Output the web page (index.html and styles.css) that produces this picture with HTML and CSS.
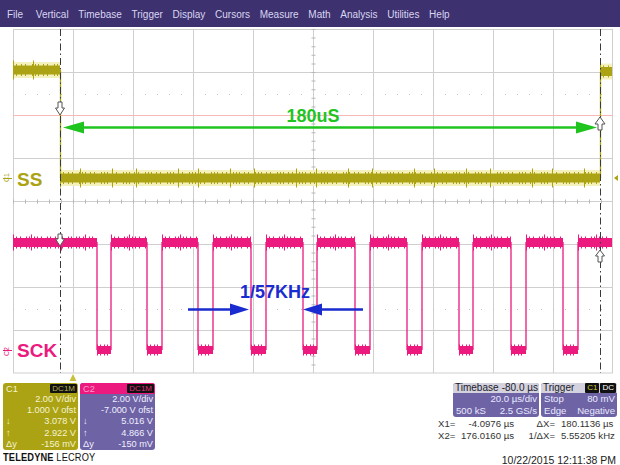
FILE: index.html
```html
<!DOCTYPE html>
<html lang="en">
<head>
    <meta charset="UTF-8">
    <title>Scope capture</title>
    <link rel="stylesheet" href="styles.css">
</head>
<body>
    <div class="scope">
        <nav class="menubar">
            <span>File</span>
            <span>Vertical</span>
            <span>Timebase</span>
            <span>Trigger</span>
            <span>Display</span>
            <span>Cursors</span>
            <span>Measure</span>
            <span>Math</span>
            <span>Analysis</span>
            <span>Utilities</span>
            <span>Help</span>
        </nav>

        <svg class="screen" width="620" height="354" viewBox="0 27 620 354">
            <defs>
                <path id="ss-bands" d="M13 70H60 M60 178H600 M600 71.5H612"/>
                <path id="sck-highs" d="M13 242.5H97 M111 242.5H147 M162 242.5H198 M213 242.5H251 M266 242.5H303 M317 242.5H355 M370 242.5H407 M422 242.5H459 M473 242.5H511 M526 242.5H563 M578 242.5H612"/>
                <path id="sck-lows" d="M97 350H111 M147 350H162 M198 350H213 M251 350H266 M303 350H317 M355 350H370 M407 350H422 M459 350H473 M511 350H526 M563 350H578"/>
            </defs>

            <!-- graticule -->
            <g class="grid">
                <rect x="13.5" y="29.5" width="599" height="343.5"/>
                <path d="M73.5 29V373 M133.5 29V373 M193.5 29V373 M253.5 29V373 M313.5 29V373 M373.5 29V373 M433.5 29V373 M493.5 29V373 M553.5 29V373"/>
                <path d="M13 72.5H613 M13 158.5H613 M13 201.5H613 M13 244.5H613 M13 287.5H613 M13 330.5H613"/>
            </g>
            <path class="grid-dots" d="M13 94.5H613 M13 309.5H613"/>
            <path class="grid-ticks-h" d="M13 201.5H613"/>
            <path class="grid-ticks-v" d="M313.5 29V373"/>
            <path class="level-line" d="M13 115.5H613"/>

            <!-- C1: SS -->
            <g class="trace-ss">
                <use href="#ss-bands" class="halo"/>
                <path class="edge" d="M60.5 70V178 M600.5 178V71.5"/>
                <use href="#ss-bands" class="band"/>
                <use href="#ss-bands" class="fuzz"/>
                <use href="#ss-bands" class="spikes"/>
            </g>

            <!-- C2: SCK -->
            <g class="trace-sck">
                <path class="edge" d="M97 242V350 M111 350V242 M147 242V350 M162 350V242 M198 242V350 M213 350V242 M251 242V350 M266 350V242 M303 242V350 M317 350V242 M355 242V350 M370 350V242 M407 242V350 M422 350V242 M459 242V350 M473 350V242 M511 242V350 M526 350V242 M563 242V350 M578 350V242"/>
                <use href="#sck-highs" class="band-hi"/>
                <use href="#sck-highs" class="fuzz-hi"/>
                <use href="#sck-highs" class="spikes"/>
                <use href="#sck-lows" class="band-lo"/>
                <use href="#sck-lows" class="fuzz-lo"/>
            </g>

            <!-- cursors -->
            <path class="cursor" d="M60.5 29V373 M600.5 29V373"/>
            <path class="cursor-mark" d="M58 102H62V108H64.5L60 115L55.5 108H58Z"/>
            <path class="cursor-mark" d="M58 234H62V239H64.5L60 246L55.5 239H58Z"/>
            <path class="cursor-mark" d="M600 117L605 124H602V130H598V124H595Z"/>
            <path class="cursor-mark" d="M600 250L604.5 256H602V262H598V256H595.5Z"/>

            <!-- annotations -->
            <path class="ann-green line" d="M80 127.5H580"/>
            <path class="ann-green" d="M63 127.5L84 121.5V133.5Z M597 127.5L576 121.5V133.5Z"/>
            <text class="ann-text green" x="313" y="122" text-anchor="middle">180uS</text>

            <path class="ann-blue line" d="M188 309.5H232 M320 309.5H363"/>
            <path class="ann-blue" d="M249 309.5L230 303.5V315.5Z M303 309.5L322 303.5V315.5Z"/>
            <text class="ann-text blue" x="240" y="298">1/57KHz</text>

            <!-- trace labels -->
            <text class="label ss" x="17" y="186">SS</text>
            <text class="label sck" x="17" y="357">SCK</text>
            <text class="tag ss" transform="translate(9 182) rotate(-90)">C1</text>
            <path class="tag-line ss" d="M3 178.5H12"/>
            <text class="tag sck" transform="translate(9 356) rotate(-90)">C2</text>
            <path class="tag-line sck" d="M3 350.5H12"/>

            <path class="marker-ss" d="M614 178L618 175V181Z"/>
            <path class="marker-trig" d="M73 374L76.5 381H69.5Z"/>
        </svg>

        <div class="panel">
            <div class="left">
                <div class="channels">
                    <div class="ch ch1">
                        <div class="ch-head"><span>C1</span><span class="badge">DC1M</span></div>
                        <div class="row"><span></span><span>2.00 V/div</span></div>
                        <div class="row"><span></span><span>1.000 V ofst</span></div>
                        <div class="row"><span>&darr;</span><span>3.078 V</span></div>
                        <div class="row"><span>&uarr;</span><span>2.922 V</span></div>
                        <div class="row"><span>&Delta;y</span><span>-156 mV</span></div>
                    </div>
                    <div class="ch ch2">
                        <div class="ch-head"><span>C2</span><span class="badge">DC1M</span></div>
                        <div class="row"><span></span><span>2.00 V/div</span></div>
                        <div class="row"><span></span><span>-7.000 V ofst</span></div>
                        <div class="row"><span>&darr;</span><span>5.016 V</span></div>
                        <div class="row"><span>&uarr;</span><span>4.866 V</span></div>
                        <div class="row"><span>&Delta;y</span><span>-150 mV</span></div>
                    </div>
                </div>
                <div class="brand"><b>TELEDYNE</b> LECROY</div>
            </div>

            <div class="right">
                <div class="status">
                    <div class="tbox timebase">
                        <div class="tb-head"><span>Timebase</span><span>-80.0 &micro;s</span></div>
                        <div class="row"><span></span><span>20.0 &micro;s/div</span></div>
                        <div class="row"><span>500 kS</span><span>2.5 GS/s</span></div>
                    </div>
                    <div class="tbox trigger">
                        <div class="tb-head"><span>Trigger</span><span class="badges"><span class="badge c1">C1</span><span class="badge">DC</span></span></div>
                        <div class="row"><span>Stop</span><span>80 mV</span></div>
                        <div class="row"><span>Edge</span><span>Negative</span></div>
                    </div>
                </div>
                <div class="readout">
                    <span>X1=</span><span class="num">-4.0976 &micro;s</span><span class="lbl">&Delta;X=</span><span class="val">180.1136 &micro;s</span>
                    <span>X2=</span><span class="num">176.0160 &micro;s</span><span class="lbl">1/&Delta;X=</span><span class="val">5.55205 kHz</span>
                </div>
                <div class="stamp">10/22/2015 12:11:38 PM</div>
            </div>
        </div>
    </div>
</body>
</html>
```

FILE: styles.css
```css
:root {
    --menu-bg: #3d3170;
    --menu-text: #d9d6ef;
    --grid: #cfcfcf;
    --ss: #aba313;
    --sck: #ec1a7e;
    --box-purple: #6d63a5;
    --green: #1fc41f;
    --blue: #1a2bd0;
}

body {
    margin: 0;
    background: #fff;
    font-family: 'Liberation Sans', Arial, sans-serif;
}
.scope {
    width: 620px;
    height: 465px;
    overflow: hidden;
    background: #fff;
}

/* menu */
.menubar {
    height: 27px;
    background: var(--menu-bg);
    color: var(--menu-text);
    font-size: 10px;
    display: flex;
    align-items: center;
    gap: 9.7px;
    padding-left: 7px;
    padding-top: 1px;
    box-sizing: border-box;
}
.menubar span:first-child {
    margin-right: 3px;
}

/* screen */
.screen {
    display: block;
}
.grid rect, .grid path {
    fill: none;
    stroke: var(--grid);
    stroke-width: 1;
}
.grid-dots {
    stroke: #c4c4c4;
    stroke-width: 1;
    stroke-dasharray: 1 11;
}
.grid-ticks-h {
    stroke: #b8b8b8;
    stroke-width: 4;
    stroke-dasharray: 1 11;
}
.grid-ticks-v {
    stroke: #b8b8b8;
    stroke-width: 4;
    stroke-dasharray: 1 7.6;
}
.level-line {
    stroke: #f6b8b8;
    stroke-width: 1;
}

.trace-ss { stroke: var(--ss); fill: none; }
.trace-ss .halo { stroke: #f5f1bd; stroke-width: 16; }
.trace-ss .edge { stroke-width: 1.3; }
.trace-ss .band { stroke-width: 9; }
.trace-ss .fuzz { stroke-width: 12; stroke-dasharray: 1 2 1 4 1 3 1 6 1 2; }
.trace-ss .spikes { stroke-width: 19; stroke-dasharray: 1 19 1 31 1 23 1 41; }

.trace-sck { stroke: var(--sck); fill: none; }
.trace-sck .edge { stroke-width: 1.3; }
.trace-sck .band-hi { stroke-width: 9; }
.trace-sck .fuzz-hi { stroke-width: 12; stroke-dasharray: 1 2 1 3 1 5 1 2 1 4; }
.trace-sck .spikes { stroke-width: 16; stroke-dasharray: 1 17 1 29 1 23 1 37; }
.trace-sck .band-lo { stroke-width: 8; }
.trace-sck .fuzz-lo { stroke-width: 11; stroke-dasharray: 1 2 1 3 1 2 1 4; }

.cursor {
    stroke: #3a3a3a;
    stroke-width: 1;
    stroke-dasharray: 7 3 1.5 3;
}
.cursor-mark {
    fill: #fff;
    stroke: #555;
    stroke-width: 1;
}

.ann-green { fill: var(--green); }
.ann-blue { fill: var(--blue); }
.ann-green.line { fill: none; stroke: var(--green); stroke-width: 2.5; }
.ann-blue.line { fill: none; stroke: var(--blue); stroke-width: 2.5; }
.ann-text {
    font-family: 'Liberation Sans', Arial, sans-serif;
    font-weight: bold;
    font-size: 18px;
}
.ann-text.green { fill: var(--green); }
.ann-text.blue { fill: var(--blue); }

.label {
    font-family: 'Liberation Sans', Arial, sans-serif;
    font-weight: bold;
    font-size: 19px;
}
.label.ss, .tag.ss { fill: var(--ss); }
.label.sck, .tag.sck { fill: var(--sck); }
.tag {
    font-family: 'Liberation Sans', Arial, sans-serif;
    font-size: 7px;
}
.tag-line { stroke-width: 1; }
.tag-line.ss { stroke: var(--ss); }
.tag-line.sck { stroke: var(--sck); }
.marker-ss { fill: var(--ss); }
.marker-trig { fill: #c9c03c; }

/* bottom panel */
.panel {
    height: 84px;
    display: flex;
    justify-content: space-between;
    padding: 2px 3px 0 3px;
    box-sizing: border-box;
}
.channels {
    display: flex;
    gap: 2px;
}
.ch {
    width: 75px;
    height: 67px;
    border-radius: 3px;
    overflow: hidden;
    font-size: 9.2px;
    box-sizing: border-box;
}
.ch-head {
    height: 11px;
    display: flex;
    justify-content: space-between;
    align-items: center;
    padding: 0 1px 0 3px;
}
.row {
    height: 11.2px;
    line-height: 11.2px;
    display: flex;
    justify-content: space-between;
    padding: 0 2px 0 3px;
    white-space: nowrap;
}
.badge {
    background: #111;
    font-size: 8px;
    line-height: 9px;
    padding: 0 2px;
    border-radius: 1px;
}
.ch1 {
    background: var(--ss);
    color: #f6f3d2;
}
.ch1 .badge { color: #b9b04a; }
.ch2 {
    background: var(--box-purple);
    color: #f1efff;
}
.ch2 .ch-head {
    background: var(--sck);
    color: #ff9fcc;
}
.ch2 .badge { color: #e0307f; }

.brand {
    margin-top: 2px;
    font-size: 11px;
    line-height: 11px;
    color: #111;
    transform: scaleX(0.84);
    transform-origin: left center;
    white-space: nowrap;
    letter-spacing: 0.2px;
}

.right {
    width: 179px;
}
.status {
    display: flex;
    gap: 2px;
    padding-left: 15px;
}
.tbox {
    height: 34px;
    background: var(--box-purple);
    color: #ebe9ff;
    border-radius: 3px;
    overflow: hidden;
    font-size: 9.6px;
}
.tbox .row {
    height: 12px;
    line-height: 12px;
}
.timebase { width: 86px; }
.trigger { width: 76px; }
.tb-head {
    height: 10px;
    line-height: 10px;
    background: #d3d2de;
    color: #1d1d2a;
    display: flex;
    justify-content: space-between;
    padding: 0 1px 0 2px;
    font-size: 10px;
}
.badges { display: flex; gap: 1px; }
.tb-head .badge { color: #fff; font-size: 8px; line-height: 10px; }
.tb-head .badge.c1 { color: #d4cb3a; }

.readout {
    margin-top: 1px;
    display: grid;
    grid-template-columns: 17px 59px 41px 62px;
    font-size: 9.6px;
    line-height: 12px;
    color: #333;
    white-space: nowrap;
}
.readout .num, .readout .lbl { text-align: right; }
.readout .val { padding-left: 6px; }
.stamp {
    margin-top: 12px;
    font-size: 10.5px;
    line-height: 12px;
    color: #222;
    text-align: right;
    padding-right: 1px;
}
```
